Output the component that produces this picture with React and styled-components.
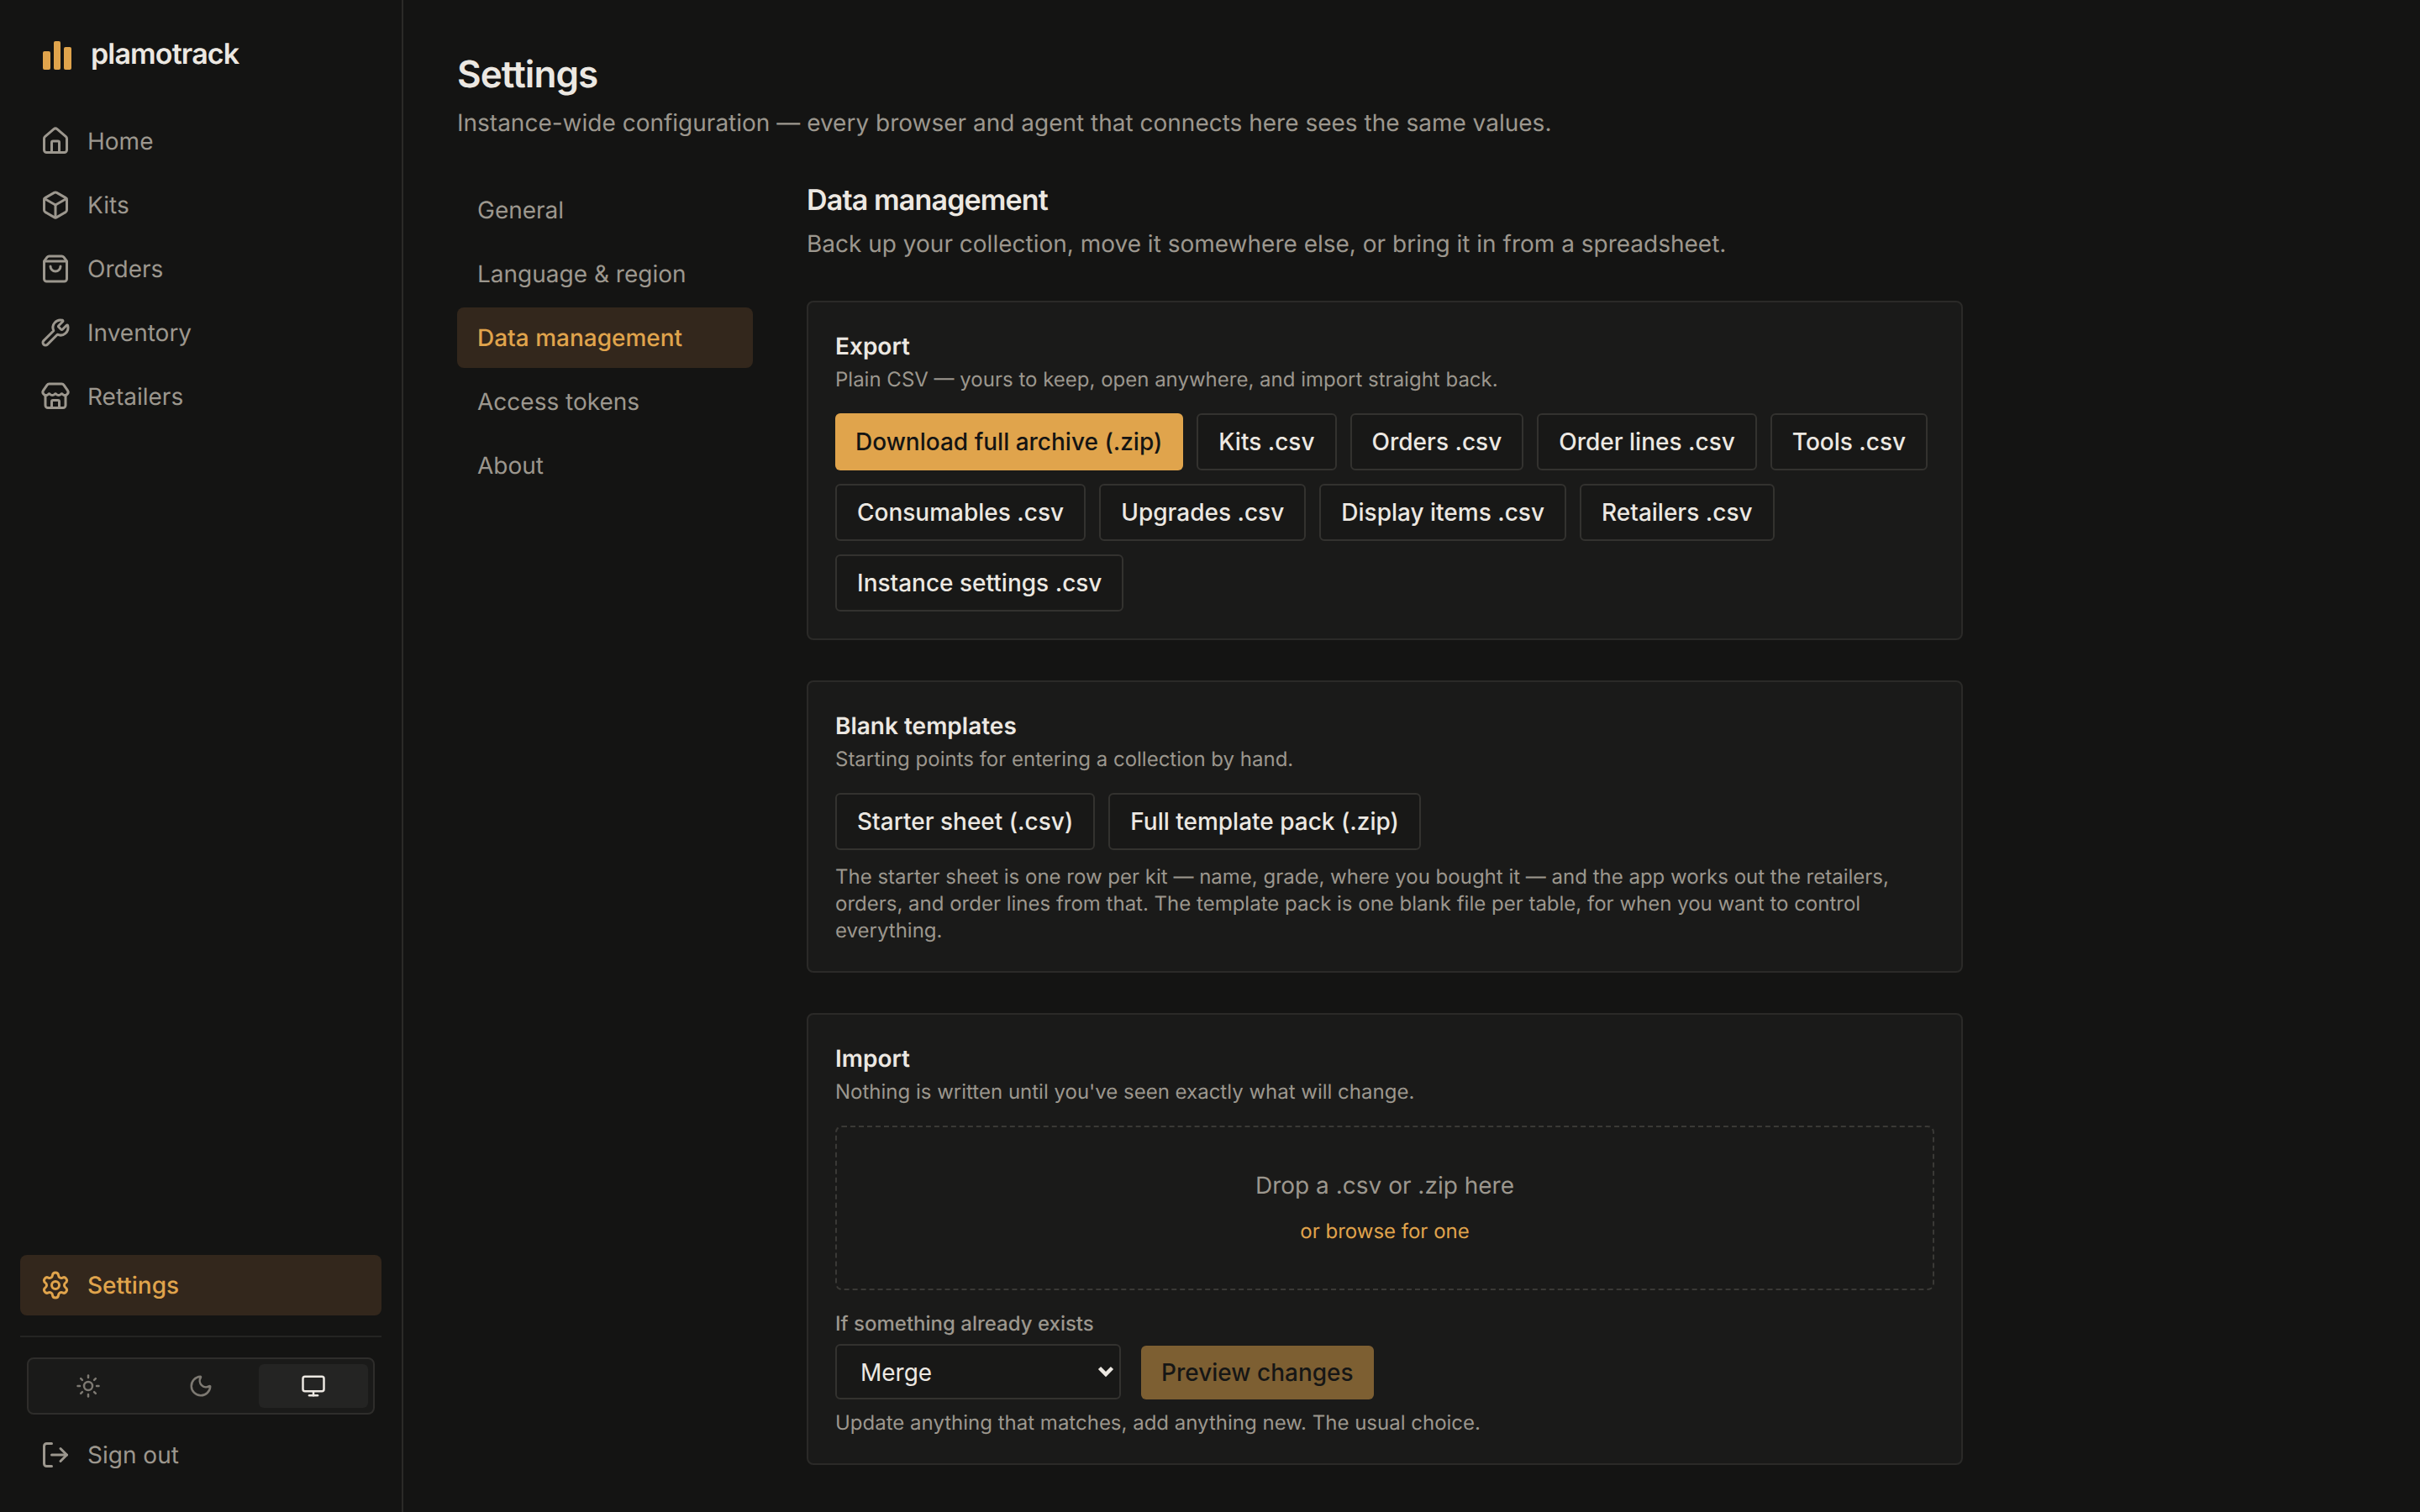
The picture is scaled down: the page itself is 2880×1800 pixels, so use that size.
import React from "react";
import styled, { createGlobalStyle } from "styled-components";
import {
  House,
  Box,
  ShoppingBag,
  Wrench,
  Store,
  Settings,
  Sun,
  Moon,
  Monitor,
  LogOut,
} from "lucide-react";

const GlobalStyle = createGlobalStyle`
  * { box-sizing: border-box; }
  html, body {
    margin: 0;
    height: 100%;
    background: #141413;
    color: #ece8e2;
    font-family: Inter, "Liberation Sans", sans-serif;
    text-rendering: geometricPrecision;
    -webkit-font-smoothing: antialiased;
  }
`;

const Shell = styled.div`
  display: flex;
  height: 1800px;
  overflow: hidden;
`;

const Sidebar = styled.aside`
  width: 480px;
  flex: none;
  display: flex;
  flex-direction: column;
  padding: 48px 24px 32px;
  border-right: 2px solid #2b2a28;
`;

const Brand = styled.div`
  display: flex;
  align-items: center;
  gap: 23px;
  height: 36px;
  padding-left: 27px;
  margin-bottom: 48px;
`;

const BrandName = styled.span`
  padding-bottom: 2px;
  font-size: 34px;
  line-height: 32px;
  font-weight: 600;
  letter-spacing: -0.85px;
`;

const NavList = styled.nav`
  display: flex;
  flex-direction: column;
  gap: 4px;
`;

const NavItem = styled.a`
  display: flex;
  align-items: center;
  gap: 20px;
  height: 72px;
  padding: 0 24px;
  border-radius: 8px;
  font-size: 28px;
  font-weight: ${(p) => (p.$active ? 500 : 400)};
  color: ${(p) => (p.$active ? "#e0a44c" : "#9c978e")};
  background: ${(p) => (p.$active ? "#33271c" : "transparent")};
`;

const SidebarFooter = styled.div`
  margin-top: auto;
  display: flex;
  flex-direction: column;
`;

const Divider = styled.hr`
  width: 100%;
  height: 2px;
  margin: 24px 0;
  border: 0;
  background: #242422;
`;

const ThemeSwitch = styled.div`
  display: grid;
  grid-template-columns: repeat(3, 1fr);
  gap: 4px;
  margin: 0 8px 12px;
  padding: 6px;
  border: 2px solid #2e2d2b;
  border-radius: 8px;
  background: #1a1a19;
`;

const ThemeOption = styled.button`
  display: flex;
  align-items: center;
  justify-content: center;
  height: 52px;
  padding: 0;
  border: 0;
  border-radius: 6px;
  color: ${(p) => (p.$active ? "#ece8e2" : "#7d7972")};
  background: ${(p) => (p.$active ? "#242423" : "transparent")};
`;

const Main = styled.main`
  flex: 1;
  min-width: 0;
  padding: 58px 64px 0;
`;

const PageTitle = styled.h1`
  margin: 0;
  font-size: 44px;
  line-height: 60px;
  font-weight: 600;
  letter-spacing: -0.88px;
`;

const PageIntro = styled.p`
  margin: 6px 0 46px;
  font-size: 28px;
  line-height: 44px;
  color: #9c978e;
`;

const Columns = styled.div`
  display: flex;
  gap: 64px;
  width: 1792px;
`;

const Tabs = styled.nav`
  width: 352px;
  flex: none;
  display: flex;
  flex-direction: column;
  gap: 4px;
`;

const Tab = styled.a`
  display: flex;
  align-items: center;
  height: 72px;
  padding: 0 24px;
  border-radius: 8px;
  font-size: 28px;
  font-weight: ${(p) => (p.$active ? 500 : 400)};
  color: ${(p) => (p.$active ? "#e0a44c" : "#9c978e")};
  background: ${(p) => (p.$active ? "#33271c" : "transparent")};
`;

const Content = styled.section`
  flex: 1;
  min-width: 0;
`;

const SectionTitle = styled.h2`
  margin: 0;
  font-size: 34px;
  line-height: 50px;
  font-weight: 600;
  letter-spacing: -0.85px;
`;

const SectionIntro = styled.p`
  margin: 4px 0 46px;
  font-size: 28px;
  line-height: 44px;
  color: #9c978e;
`;

const Card = styled.div`
  margin-bottom: 48px;
  padding: 32px;
  border: 2px solid #2b2a28;
  border-radius: 8px;
  background: #1a1a19;
`;

const CardTitle = styled.h3`
  margin: 0;
  font-size: 28px;
  line-height: 40px;
  font-weight: 600;
`;

const CardHint = styled.p`
  margin: 0 0 20px;
  font-size: 24px;
  line-height: 40px;
  color: #9c978e;
`;

const ButtonRow = styled.div`
  display: flex;
  flex-wrap: wrap;
  gap: 16px;
`;

const Button = styled.button`
  height: 68px;
  padding: 0 24px;
  border: 2px solid #33322f;
  border-radius: 6px;
  font: 500 28px Inter, sans-serif;
  color: #ece8e2;
  background: #181817;
`;

const PrimaryButton = styled(Button)`
  padding: 0 25px 0 24px;
  border: 0;
  color: #141413;
  background: #e0a44c;
`;

const Note = styled.p`
  margin: ${(p) => p.$top}px 0 0;
  font-size: 24px;
  line-height: 32px;
  color: #9c978e;
`;

const DropZone = styled.div`
  display: flex;
  flex-direction: column;
  align-items: center;
  height: 196px;
  padding-top: 47px;
  border: 2px dashed #3a3936;
  border-radius: 8px;
`;

const DropLabel = styled.span`
  font-size: 28px;
  line-height: 44px;
  color: #9c978e;
`;

const BrowseLink = styled.a`
  margin-top: 17px;
  font-size: 24px;
  line-height: 32px;
  color: #e0a44c;
`;

const FieldLabel = styled.label`
  display: block;
  margin-top: 24px;
  font-size: 24px;
  line-height: 32px;
  font-weight: 500;
  color: #9c978e;
`;

const ImportRow = styled.div`
  display: flex;
  align-items: flex-end;
  gap: 24px;
  margin-top: 8px;
`;

const SelectWrap = styled.div`
  position: relative;
  width: 340px;
  height: 66px;
`;

const Select = styled.select`
  appearance: none;
  width: 100%;
  height: 100%;
  padding: 2px 48px 0 28px;
  border: 2px solid #33322f;
  border-radius: 6px;
  font: 400 28px Inter, sans-serif;
  color: #ece8e2;
  background: #181817;
`;

const SelectArrow = styled.svg`
  position: absolute;
  top: 26px;
  right: 8px;
  pointer-events: none;
`;

const PreviewButton = styled(PrimaryButton)`
  height: 64px;
  padding: 0 24px;
  opacity: 0.5;
`;

const links = [
  { label: "Home", Icon: House },
  { label: "Kits", Icon: Box },
  { label: "Orders", Icon: ShoppingBag },
  { label: "Inventory", Icon: Wrench },
  { label: "Retailers", Icon: Store },
];

const tabs = [
  "General",
  "Language & region",
  "Data management",
  "Access tokens",
  "About",
];

const exportsList = [
  "Kits .csv",
  "Orders .csv",
  "Order lines .csv",
  "Tools .csv",
  "Consumables .csv",
  "Upgrades .csv",
  "Display items .csv",
  "Retailers .csv",
  "Instance settings .csv",
];

const Logo = () => (
  <svg width="34" height="34" viewBox="0 0 34 34" fill="#e0a44c">
    <rect x="0" y="12" width="9" height="22" rx="2" />
    <rect x="13" y="0" width="8" height="34" rx="2" />
    <rect x="25" y="7" width="9" height="27" rx="2" />
  </svg>
);

export default function App() {
  return (
    <Shell>
      <GlobalStyle />
      <Sidebar>
        <Brand>
          <Logo />
          <BrandName>plamotrack</BrandName>
        </Brand>
        <NavList>
          {links.map(({ label, Icon }) => (
            <NavItem key={label}>
              <Icon size={36} />
              {label}
            </NavItem>
          ))}
        </NavList>
        <SidebarFooter>
          <NavItem $active>
            <Settings size={36} />
            Settings
          </NavItem>
          <Divider />
          <ThemeSwitch>
            <ThemeOption>
              <Sun size={30} />
            </ThemeOption>
            <ThemeOption>
              <Moon size={30} />
            </ThemeOption>
            <ThemeOption $active>
              <Monitor size={30} />
            </ThemeOption>
          </ThemeSwitch>
          <NavItem>
            <LogOut size={36} />
            Sign out
          </NavItem>
        </SidebarFooter>
      </Sidebar>
      <Main>
        <PageTitle>Settings</PageTitle>
        <PageIntro>
          Instance-wide configuration — every browser and agent that connects
          here sees the same values.
        </PageIntro>
        <Columns>
          <Tabs>
            {tabs.map((t) => (
              <Tab key={t} $active={t === "Data management"}>
                {t}
              </Tab>
            ))}
          </Tabs>
          <Content>
            <SectionTitle>Data management</SectionTitle>
            <SectionIntro>
              Back up your collection, move it somewhere else, or bring it in
              from a spreadsheet.
            </SectionIntro>
            <Card>
              <CardTitle>Export</CardTitle>
              <CardHint>
                Plain CSV — yours to keep, open anywhere, and import straight
                back.
              </CardHint>
              <ButtonRow>
                <PrimaryButton>Download full archive (.zip)</PrimaryButton>
                {exportsList.map((name) => (
                  <Button key={name}>{name}</Button>
                ))}
              </ButtonRow>
            </Card>
            <Card>
              <CardTitle>Blank templates</CardTitle>
              <CardHint>
                Starting points for entering a collection by hand.
              </CardHint>
              <ButtonRow>
                <Button>Starter sheet (.csv)</Button>
                <Button>Full template pack (.zip)</Button>
              </ButtonRow>
              <Note $top={16}>
                The starter sheet is one row per kit — name, grade, where you
                bought it — and the app works out the retailers, orders, and
                order lines from that. The template pack is one blank file per
                table, for when you want to control everything.
              </Note>
            </Card>
            <Card>
              <CardTitle>Import</CardTitle>
              <CardHint>
                Nothing is written until you've seen exactly what will change.
              </CardHint>
              <DropZone>
                <DropLabel>Drop a .csv or .zip here</DropLabel>
                <BrowseLink>or browse for one</BrowseLink>
              </DropZone>
              <FieldLabel>If something already exists</FieldLabel>
              <ImportRow>
                <SelectWrap>
                  <Select defaultValue="merge">
                    <option value="merge">Merge</option>
                  </Select>
                  <SelectArrow
                    width="20"
                    height="14"
                    viewBox="0 0 20 14"
                    fill="none"
                    stroke="#ece8e2"
                    strokeWidth="4.5"
                  >
                    <path d="M2.5 2.5 10 10l7.5-7.5" />
                  </SelectArrow>
                </SelectWrap>
                <PreviewButton>Preview changes</PreviewButton>
              </ImportRow>
              <Note $top={12}>
                Update anything that matches, add anything new. The usual
                choice.
              </Note>
            </Card>
          </Content>
        </Columns>
      </Main>
    </Shell>
  );
}
